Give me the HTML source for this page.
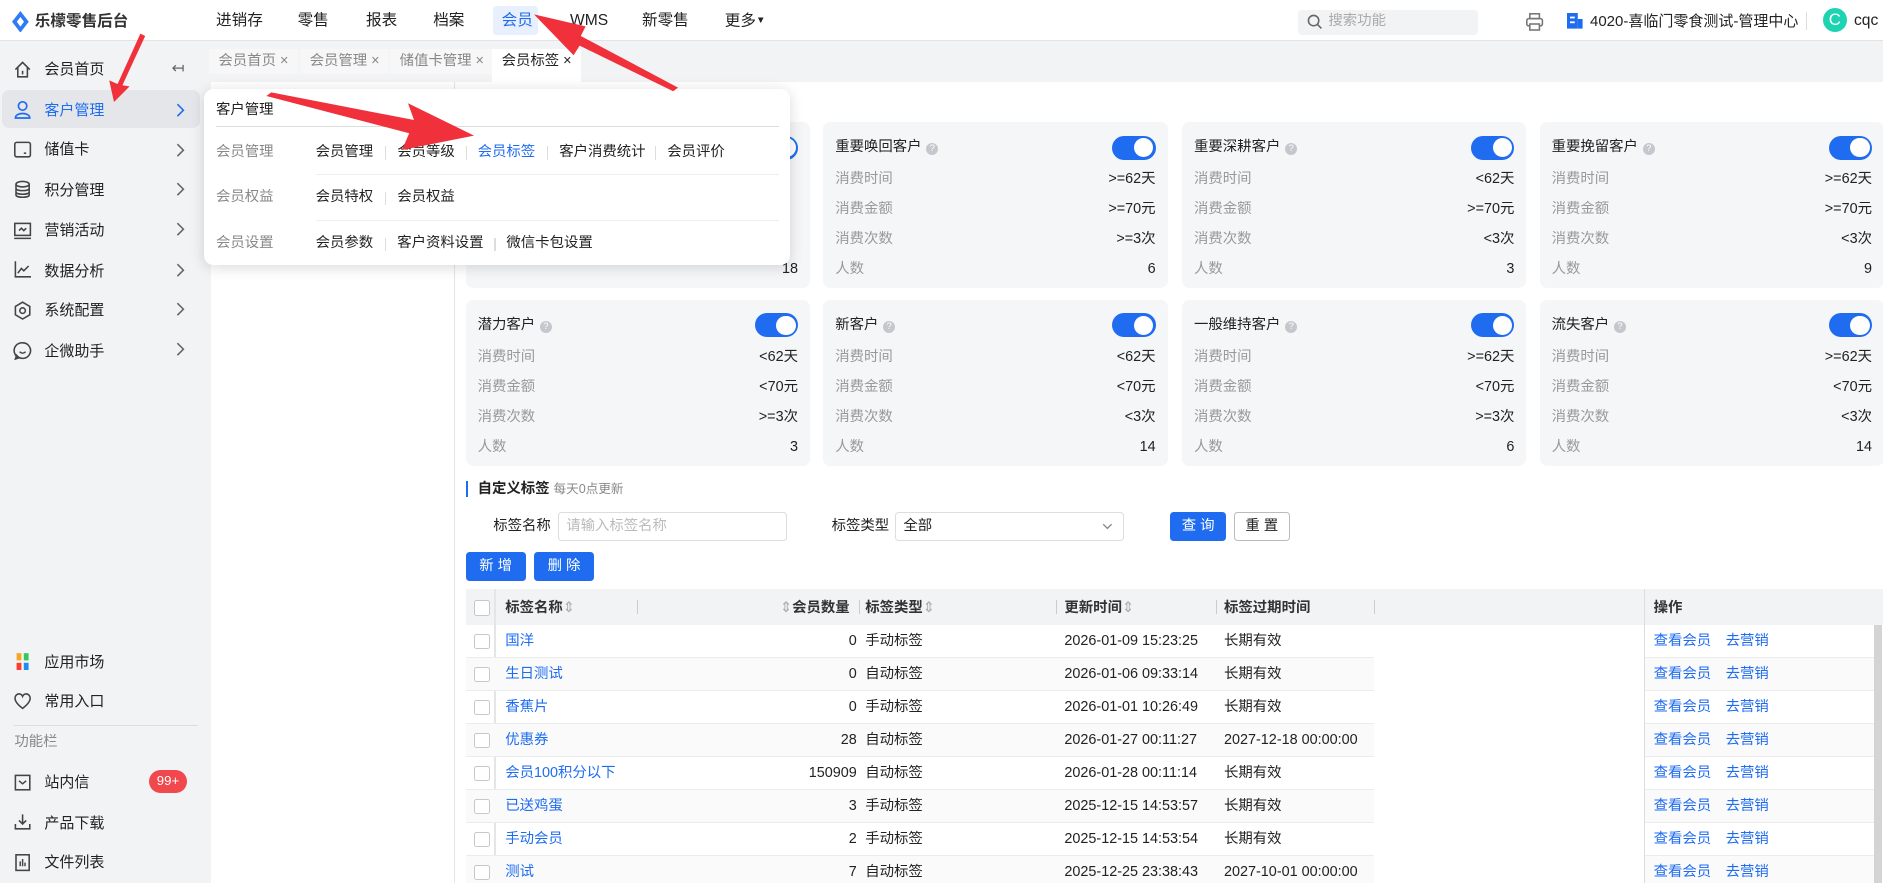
<!DOCTYPE html>
<html><head><meta charset="utf-8"><style>
*{box-sizing:border-box;margin:0;padding:0}
html,body{width:1883px;height:883px;overflow:hidden;background:#fff}
#w{zoom:1.2;width:1570px;height:736px;position:relative;font-family:"Liberation Sans","Noto Sans CJK SC",sans-serif;font-size:12px;line-height:16px;color:#222;overflow:hidden}
.a{position:absolute;white-space:nowrap}
.top{left:0;top:0;width:1570px;height:34px;background:#fff;border-bottom:1px solid #e3e3e3}
.nav{top:9px;font-size:13px;color:#222}
.side{left:0;top:34px;width:176px;height:702px;background:#f2f3f5}
.si{left:37px;font-size:12.5px;color:#222}
.ic{left:11px;width:16px;height:16px}
.chev{left:146px;width:8px;height:12px}
.tabs{left:176px;top:34px;width:1394px;height:34px;background:#f2f3f5}
.tab{top:41px;height:21px;background:#f7f7f8;color:#888;font-size:12px;line-height:21px;padding:0 8px}
.card{width:287px;height:138px;background:#f5f6f8;border-radius:6px}
.card .t{position:absolute;left:10px;top:13px;font-size:12px;color:#222}
.card .q{display:inline-block;width:10px;height:10px;border-radius:50%;background:#c4c7cc;color:#fff;font-size:8px;line-height:10px;text-align:center;margin-left:4px;vertical-align:0}
.sw{position:absolute;right:10px;top:11px;width:36px;height:20px;border-radius:10px;background:#1f6cf0}
.sw:after{content:"";position:absolute;right:2px;top:2px;width:16px;height:16px;border-radius:50%;background:#fff}
.r{position:absolute;left:10px;right:10px;font-size:12px;color:#999}
.r b{position:absolute;right:0;top:0;font-weight:normal;color:#222}
.th{top:491px;left:388px;width:1182px;height:30px;background:#f2f3f5}
.hd{font-size:12px;font-weight:bold;color:#333;top:499px}
.row{left:388px;width:757px;height:27.5px;border-bottom:1px solid #ececec}
.ops{left:1371px;width:191px;height:27.5px;border-bottom:1px solid #ececec}
.cb{width:13px;height:13px;border:1px solid #c8c8c8;background:#fff;border-radius:2px}
.lk{color:#1f6cf0}
.pop{left:170px;top:74px;width:488px;height:147px;background:#fff;border-radius:8px;box-shadow:0 2px 12px rgba(0,0,0,.15)}
.pl{font-size:12px;color:#888}
.pi{font-size:12px;color:#222}
.sep{width:1px;height:11px;background:#ddd}
</style></head><body><div id="w">
<div class="a top"></div>
<svg class="a" style="left:10px;top:9px" width="14" height="18" viewBox="0 0 14 18"><path d="M7 0L14 9L7 18L0 9Z" fill="#2f7bf5"/><path d="M7 5L10 9L7 13L4 9Z" fill="#fff"/></svg>
<div class="a" style="left:29px;top:10px;font-size:13px;font-weight:bold;color:#333">乐檬零售后台</div>
<div class="a nav" style="left:180px">进销存</div>
<div class="a nav" style="left:248px">零售</div>
<div class="a nav" style="left:305px">报表</div>
<div class="a nav" style="left:361px">档案</div>
<div class="a" style="left:411px;top:5px;width:37px;height:24px;background:#e9f0fd;border-radius:3px"></div>
<div class="a nav" style="left:418px;color:#1f6cf0">会员</div>
<div class="a nav" style="left:475px">WMS</div>
<div class="a nav" style="left:535px">新零售</div>
<div class="a nav" style="left:604px">更多<span style="font-size:8px;vertical-align:2px">▼</span></div>
<div class="a" style="left:1082px;top:8px;width:150px;height:21px;background:#f2f3f5;border-radius:3px"></div>
<svg class="a" style="left:1089px;top:12px" width="13" height="13"><circle cx="5.5" cy="5.5" r="4.3" fill="none" stroke="#666" stroke-width="1.3"/><path d="M8.5 8.5L12 12" stroke="#666" stroke-width="1.3"/></svg>
<div class="a" style="left:1107px;top:10px;color:#aaa;font-size:12px">搜索功能</div>
<svg class="a" style="left:1271px;top:10px" width="16" height="16"><rect x="4" y="1.5" width="8" height="4" fill="none" stroke="#777" stroke-width="1.3"/><rect x="1.5" y="5.5" width="13" height="6" rx="1.5" fill="none" stroke="#777" stroke-width="1.3"/><rect x="4" y="10" width="8" height="5" fill="#fff" stroke="#777" stroke-width="1.3"/></svg>
<svg class="a" style="left:1306px;top:11px" width="14" height="14"><rect x="0" y="0" width="9" height="13" fill="#1f6cf0"/><rect x="9" y="5" width="4" height="8" fill="#1f6cf0"/><rect x="2.5" y="3" width="4" height="1.5" fill="#fff"/><rect x="2.5" y="7" width="4" height="1.5" fill="#fff"/></svg>
<div class="a" style="left:1325px;top:10px;font-size:12.5px;color:#222">4020-喜临门零食测试-管理中心</div>
<div class="a" style="left:1505px;top:10px;width:1px;height:15px;background:#ddd"></div>
<div class="a" style="left:1519px;top:7px;width:20px;height:20px;border-radius:50%;background:#1cd3b2;color:#fff;text-align:center;line-height:20px;font-size:14px">C</div>
<div class="a" style="left:1545px;top:9px;font-size:13px">cqc</div>

<div class="a side"></div>
<div class="a" style="left:2px;top:75px;width:165px;height:32px;background:#e4e6ea;border-radius:6px"></div>
<svg class="a ic" style="top:50px" viewBox="0 0 16 16"><path d="M2 8L8 2L14 8M4 6V14H12V6" fill="none" stroke="#444" stroke-width="1.3"/><path d="M8 9V12" stroke="#444" stroke-width="1.3"/></svg>
<div class="a si" style="top:50px">会员首页</div><div class="a" style="left:143px;top:49px;color:#666;font-size:13px">↤</div>
<svg class="a ic" style="top:83px" viewBox="0 0 16 16"><circle cx="8" cy="5" r="3.5" fill="none" stroke="#1f6cf0" stroke-width="1.4"/><path d="M2 15C2 10 14 10 14 15Z" fill="none" stroke="#1f6cf0" stroke-width="1.4"/></svg>
<div class="a si" style="top:84px;color:#1f6cf0">客户管理</div>
<svg class="a chev" style="top:86px" viewBox="0 0 8 12"><path d="M2 1L7 6L2 11" fill="none" stroke="#1f6cf0" stroke-width="1.3"/></svg>
<svg class="a ic" style="top:117px" viewBox="0 0 16 16"><rect x="1.5" y="2" width="13" height="12" rx="1.5" fill="none" stroke="#444" stroke-width="1.3"/><path d="M9 11H11" stroke="#444" stroke-width="1.3"/></svg>
<div class="a si" style="top:117px">储值卡</div><svg class="a chev" style="top:119px" viewBox="0 0 8 12"><path d="M2 1L7 6L2 11" fill="none" stroke="#666" stroke-width="1.3"/></svg>
<svg class="a ic" style="top:150px" viewBox="0 0 16 16"><ellipse cx="8" cy="3.5" rx="5.5" ry="2.3" fill="none" stroke="#444" stroke-width="1.3"/><path d="M2.5 3.5V12.5C2.5 15 13.5 15 13.5 12.5V3.5M2.5 7C2.5 9.5 13.5 9.5 13.5 7M2.5 10C2.5 12.5 13.5 12.5 13.5 10" fill="none" stroke="#444" stroke-width="1.3"/></svg>
<div class="a si" style="top:151px">积分管理</div><svg class="a chev" style="top:152px" viewBox="0 0 8 12"><path d="M2 1L7 6L2 11" fill="none" stroke="#666" stroke-width="1.3"/></svg>
<svg class="a ic" style="top:184px" viewBox="0 0 16 16"><rect x="1.5" y="2" width="13" height="10" fill="none" stroke="#444" stroke-width="1.3"/><path d="M1 14.5H15M5 8L7 6L9 8L11 6" fill="none" stroke="#444" stroke-width="1.3"/></svg>
<div class="a si" style="top:184px">营销活动</div><svg class="a chev" style="top:185px" viewBox="0 0 8 12"><path d="M2 1L7 6L2 11" fill="none" stroke="#666" stroke-width="1.3"/></svg>
<svg class="a ic" style="top:217px" viewBox="0 0 16 16"><path d="M2 1V14H15M4 11L7 7L9 9L13 5" fill="none" stroke="#444" stroke-width="1.3"/></svg>
<div class="a si" style="top:218px">数据分析</div><svg class="a chev" style="top:219px" viewBox="0 0 8 12"><path d="M2 1L7 6L2 11" fill="none" stroke="#666" stroke-width="1.3"/></svg>
<svg class="a ic" style="top:251px" viewBox="0 0 16 16"><path d="M8 1L14 4.5V11.5L8 15L2 11.5V4.5Z" fill="none" stroke="#444" stroke-width="1.3"/><circle cx="8" cy="8" r="2.3" fill="none" stroke="#444" stroke-width="1.3"/></svg>
<div class="a si" style="top:251px">系统配置</div><svg class="a chev" style="top:252px" viewBox="0 0 8 12"><path d="M2 1L7 6L2 11" fill="none" stroke="#666" stroke-width="1.3"/></svg>
<svg class="a ic" style="top:284px" viewBox="0 0 16 16"><path d="M8 1.5A6.5 6.5 0 1 1 3 12L2 15L5 14A6.5 6.5 0 0 1 8 1.5Z" fill="none" stroke="#444" stroke-width="1.3"/><path d="M5.5 9C7 10.5 9 10.5 10.5 9" fill="none" stroke="#444" stroke-width="1.2"/></svg>
<div class="a si" style="top:285px">企微助手</div><svg class="a chev" style="top:285px" viewBox="0 0 8 12"><path d="M2 1L7 6L2 11" fill="none" stroke="#666" stroke-width="1.3"/></svg>

<svg class="a ic" style="top:543px" viewBox="0 0 16 16"><path d="M7 1H3V7H7Z" fill="#f5a623"/><path d="M9 1H13V7H9Z" fill="#34c759"/><path d="M3 9H7V15H3Z" fill="#ff3b30"/><path d="M9 9H13V15H9Z" fill="#1f8cf0"/></svg>
<div class="a si" style="top:544px">应用市场</div>
<svg class="a ic" style="top:576px" viewBox="0 0 16 16"><path d="M8 14.5C2 10 1 7 2 4.5C3.5 1.5 7 2 8 4.5C9 2 12.5 1.5 14 4.5C15 7 14 10 8 14.5Z" fill="none" stroke="#444" stroke-width="1.3"/></svg>
<div class="a si" style="top:577px">常用入口</div>
<div class="a" style="left:12px;top:604px;width:153px;height:1px;background:#ddd"></div>
<div class="a" style="left:12px;top:611px;color:#888;font-size:12px">功能栏</div>
<svg class="a ic" style="top:644px" viewBox="0 0 16 16"><rect x="2" y="2" width="12" height="12" fill="none" stroke="#444" stroke-width="1.3"/><path d="M5 6.5L8 9L11 6.5" fill="none" stroke="#444" stroke-width="1.3"/></svg>
<div class="a si" style="top:644px">站内信</div>
<div class="a" style="left:124px;top:642px;width:32px;height:19px;border-radius:10px;background:#f0484c;color:#fff;font-size:11px;text-align:center;line-height:19px">99+</div>
<svg class="a ic" style="top:677px" viewBox="0 0 16 16"><path d="M8 2V10M5 7L8 10L11 7M2 10V14H14V10" fill="none" stroke="#444" stroke-width="1.3"/></svg>
<div class="a si" style="top:678px">产品下载</div>
<svg class="a ic" style="top:711px" viewBox="0 0 16 16"><rect x="2.5" y="1.5" width="11" height="13" fill="none" stroke="#444" stroke-width="1.3"/><path d="M6 11V7M8 11V5M10 11V8" stroke="#444" stroke-width="1.2"/></svg>
<div class="a si" style="top:711px">文件列表</div>

<div class="a tabs"></div>
<div class="a tab" style="left:174px">会员首页 ×</div>
<div class="a tab" style="left:250px">会员管理 ×</div>
<div class="a tab" style="left:325px">储值卡管理 ×</div>
<div class="a tab" style="left:410px;background:#fff;color:#222;height:27px">会员标签 ×</div>
<div class="a" style="left:378px;top:68px;width:1px;height:668px;background:#e5e5e5"></div>

<!-- cards -->
<div class="a card" style="left:388px;top:102px"><div class="sw"></div><div class="r" style="top:115px"><b>18</b></div></div>
<div class="a card" style="left:686px;top:102px"><div class="t">重要唤回客户<span class="q">?</span></div><div class="sw"></div>
<div class="r" style="top:40px">消费时间<b>&gt;=62天</b></div><div class="r" style="top:65px">消费金额<b>&gt;=70元</b></div><div class="r" style="top:90px">消费次数<b>&gt;=3次</b></div><div class="r" style="top:115px">人数<b>6</b></div></div>
<div class="a card" style="left:985px;top:102px"><div class="t">重要深耕客户<span class="q">?</span></div><div class="sw"></div>
<div class="r" style="top:40px">消费时间<b>&lt;62天</b></div><div class="r" style="top:65px">消费金额<b>&gt;=70元</b></div><div class="r" style="top:90px">消费次数<b>&lt;3次</b></div><div class="r" style="top:115px">人数<b>3</b></div></div>
<div class="a card" style="left:1283px;top:102px"><div class="t">重要挽留客户<span class="q">?</span></div><div class="sw"></div>
<div class="r" style="top:40px">消费时间<b>&gt;=62天</b></div><div class="r" style="top:65px">消费金额<b>&gt;=70元</b></div><div class="r" style="top:90px">消费次数<b>&lt;3次</b></div><div class="r" style="top:115px">人数<b>9</b></div></div>

<div class="a card" style="left:388px;top:250px"><div class="t">潜力客户<span class="q">?</span></div><div class="sw"></div>
<div class="r" style="top:40px">消费时间<b>&lt;62天</b></div><div class="r" style="top:65px">消费金额<b>&lt;70元</b></div><div class="r" style="top:90px">消费次数<b>&gt;=3次</b></div><div class="r" style="top:115px">人数<b>3</b></div></div>
<div class="a card" style="left:686px;top:250px"><div class="t">新客户<span class="q">?</span></div><div class="sw"></div>
<div class="r" style="top:40px">消费时间<b>&lt;62天</b></div><div class="r" style="top:65px">消费金额<b>&lt;70元</b></div><div class="r" style="top:90px">消费次数<b>&lt;3次</b></div><div class="r" style="top:115px">人数<b>14</b></div></div>
<div class="a card" style="left:985px;top:250px"><div class="t">一般维持客户<span class="q">?</span></div><div class="sw"></div>
<div class="r" style="top:40px">消费时间<b>&gt;=62天</b></div><div class="r" style="top:65px">消费金额<b>&lt;70元</b></div><div class="r" style="top:90px">消费次数<b>&gt;=3次</b></div><div class="r" style="top:115px">人数<b>6</b></div></div>
<div class="a card" style="left:1283px;top:250px"><div class="t">流失客户<span class="q">?</span></div><div class="sw"></div>
<div class="r" style="top:40px">消费时间<b>&gt;=62天</b></div><div class="r" style="top:65px">消费金额<b>&lt;70元</b></div><div class="r" style="top:90px">消费次数<b>&lt;3次</b></div><div class="r" style="top:115px">人数<b>14</b></div></div>

<!-- custom tags -->
<div class="a" style="left:388px;top:401px;width:2px;height:13px;background:#1f6cf0"></div>
<div class="a" style="left:398px;top:400px;font-weight:bold;font-size:12px">自定义标签 <span style="font-weight:normal;color:#888;font-size:10.5px">每天0点更新</span></div>
<div class="a" style="left:411px;top:431px">标签名称</div>
<div class="a" style="left:465px;top:427px;width:191px;height:24px;border:1px solid #ddd;border-radius:3px;color:#bbb;padding:3px 6px">请输入标签名称</div>
<div class="a" style="left:693px;top:431px">标签类型</div>
<div class="a" style="left:746px;top:427px;width:191px;height:24px;border:1px solid #ddd;border-radius:3px;padding:3px 6px">全部<svg style="position:absolute;right:9px;top:8px" width="9" height="6"><path d="M1 1L4.5 4.5L8 1" fill="none" stroke="#888" stroke-width="1.1"/></svg></div>
<div class="a" style="left:975px;top:427px;width:47px;height:24px;background:#1f6cf0;color:#fff;border-radius:3px;text-align:center;line-height:24px">查 询</div>
<div class="a" style="left:1028px;top:427px;width:47px;height:24px;border:1px solid #bbb;border-radius:3px;text-align:center;line-height:22px">重 置</div>
<div class="a" style="left:388px;top:460px;width:50px;height:24px;background:#1f6cf0;color:#fff;border-radius:3px;text-align:center;line-height:24px">新 增</div>
<div class="a" style="left:445px;top:460px;width:50px;height:24px;background:#1f6cf0;color:#fff;border-radius:3px;text-align:center;line-height:24px">删 除</div>

<div class="a th"></div>
<div class="a cb" style="left:395px;top:500px"></div>
<div class="a" style="left:412px;top:491px;width:1px;height:245px;background:#e5e5e5"></div>
<div class="a hd" style="left:421px">标签名称<span style="color:#aaa;font-weight:normal">⇕</span></div>
<div class="a" style="left:531px;top:500px;width:1px;height:12px;background:#ccc"></div>
<div class="a hd" style="left:650px"><span style="color:#aaa;font-weight:normal">⇕</span>会员数量</div>
<div class="a" style="left:716px;top:500px;width:1px;height:12px;background:#ccc"></div>
<div class="a hd" style="left:721px">标签类型<span style="color:#aaa;font-weight:normal">⇕</span></div>
<div class="a" style="left:880px;top:500px;width:1px;height:12px;background:#ccc"></div>
<div class="a hd" style="left:887px">更新时间<span style="color:#aaa;font-weight:normal">⇕</span></div>
<div class="a" style="left:1013px;top:500px;width:1px;height:12px;background:#ccc"></div>
<div class="a hd" style="left:1020px">标签过期时间</div>
<div class="a" style="left:1145px;top:500px;width:1px;height:12px;background:#ccc"></div>
<div class="a" style="left:1370px;top:491px;width:1px;height:245px;background:#ddd"></div>
<div class="a hd" style="left:1378px">操作</div>
<div class="a" style="left:1562px;top:521px;width:6px;height:215px;background:#d4d4d4"></div>

<div class="a row" style="top:521px"></div><div class="a ops" style="top:521px"></div>
<div class="a row" style="top:548.5px;background:#fafafa"></div><div class="a ops" style="top:548.5px;background:#fafafa"></div>
<div class="a row" style="top:576px"></div><div class="a ops" style="top:576px"></div>
<div class="a row" style="top:603.5px;background:#fafafa"></div><div class="a ops" style="top:603.5px;background:#fafafa"></div>
<div class="a row" style="top:631px"></div><div class="a ops" style="top:631px"></div>
<div class="a row" style="top:658.5px;background:#fafafa"></div><div class="a ops" style="top:658.5px;background:#fafafa"></div>
<div class="a row" style="top:686px"></div><div class="a ops" style="top:686px"></div>
<div class="a row" style="top:713.5px;background:#fafafa"></div><div class="a ops" style="top:713.5px;background:#fafafa"></div>

<div class="a" style="left:395px;top:521px;width:1170px">
<div style="position:relative;height:27.5px"><div class="a cb" style="left:0;top:7px"></div><span class="a lk" style="left:26px;top:6px">国洋</span><span class="a" style="left:0;width:319px;text-align:right;top:6px">0</span><span class="a" style="left:326px;top:6px">手动标签</span><span class="a" style="left:492px;top:6px">2026-01-09 15:23:25</span><span class="a" style="left:625px;top:6px">长期有效</span><span class="a lk" style="left:983px;top:6px">查看会员</span><span class="a lk" style="left:1043px;top:6px">去营销</span></div>
<div style="position:relative;height:27.5px"><div class="a cb" style="left:0;top:7px"></div><span class="a lk" style="left:26px;top:6px">生日测试</span><span class="a" style="left:0;width:319px;text-align:right;top:6px">0</span><span class="a" style="left:326px;top:6px">自动标签</span><span class="a" style="left:492px;top:6px">2026-01-06 09:33:14</span><span class="a" style="left:625px;top:6px">长期有效</span><span class="a lk" style="left:983px;top:6px">查看会员</span><span class="a lk" style="left:1043px;top:6px">去营销</span></div>
<div style="position:relative;height:27.5px"><div class="a cb" style="left:0;top:7px"></div><span class="a lk" style="left:26px;top:6px">香蕉片</span><span class="a" style="left:0;width:319px;text-align:right;top:6px">0</span><span class="a" style="left:326px;top:6px">手动标签</span><span class="a" style="left:492px;top:6px">2026-01-01 10:26:49</span><span class="a" style="left:625px;top:6px">长期有效</span><span class="a lk" style="left:983px;top:6px">查看会员</span><span class="a lk" style="left:1043px;top:6px">去营销</span></div>
<div style="position:relative;height:27.5px"><div class="a cb" style="left:0;top:7px"></div><span class="a lk" style="left:26px;top:6px">优惠券</span><span class="a" style="left:0;width:319px;text-align:right;top:6px">28</span><span class="a" style="left:326px;top:6px">自动标签</span><span class="a" style="left:492px;top:6px">2026-01-27 00:11:27</span><span class="a" style="left:625px;top:6px">2027-12-18 00:00:00</span><span class="a lk" style="left:983px;top:6px">查看会员</span><span class="a lk" style="left:1043px;top:6px">去营销</span></div>
<div style="position:relative;height:27.5px"><div class="a cb" style="left:0;top:7px"></div><span class="a lk" style="left:26px;top:6px">会员100积分以下</span><span class="a" style="left:0;width:319px;text-align:right;top:6px">150909</span><span class="a" style="left:326px;top:6px">自动标签</span><span class="a" style="left:492px;top:6px">2026-01-28 00:11:14</span><span class="a" style="left:625px;top:6px">长期有效</span><span class="a lk" style="left:983px;top:6px">查看会员</span><span class="a lk" style="left:1043px;top:6px">去营销</span></div>
<div style="position:relative;height:27.5px"><div class="a cb" style="left:0;top:7px"></div><span class="a lk" style="left:26px;top:6px">已送鸡蛋</span><span class="a" style="left:0;width:319px;text-align:right;top:6px">3</span><span class="a" style="left:326px;top:6px">手动标签</span><span class="a" style="left:492px;top:6px">2025-12-15 14:53:57</span><span class="a" style="left:625px;top:6px">长期有效</span><span class="a lk" style="left:983px;top:6px">查看会员</span><span class="a lk" style="left:1043px;top:6px">去营销</span></div>
<div style="position:relative;height:27.5px"><div class="a cb" style="left:0;top:7px"></div><span class="a lk" style="left:26px;top:6px">手动会员</span><span class="a" style="left:0;width:319px;text-align:right;top:6px">2</span><span class="a" style="left:326px;top:6px">手动标签</span><span class="a" style="left:492px;top:6px">2025-12-15 14:53:54</span><span class="a" style="left:625px;top:6px">长期有效</span><span class="a lk" style="left:983px;top:6px">查看会员</span><span class="a lk" style="left:1043px;top:6px">去营销</span></div>
<div style="position:relative;height:27.5px"><div class="a cb" style="left:0;top:7px"></div><span class="a lk" style="left:26px;top:6px">测试</span><span class="a" style="left:0;width:319px;text-align:right;top:6px">7</span><span class="a" style="left:326px;top:6px">自动标签</span><span class="a" style="left:492px;top:6px">2025-12-25 23:38:43</span><span class="a" style="left:625px;top:6px">2027-10-01 00:00:00</span><span class="a lk" style="left:983px;top:6px">查看会员</span><span class="a lk" style="left:1043px;top:6px">去营销</span></div>
</div>

<!-- popup -->
<div class="a pop"></div>
<div class="a pi" style="left:180px;top:84px">客户管理</div>
<div class="a" style="left:180px;top:105px;width:469px;height:1px;background:#ddd"></div>
<div class="a pl" style="left:180px;top:119px">会员管理</div>
<div class="a pi" style="left:263px;top:119px">会员管理</div><div class="a sep" style="left:321px;top:122px"></div>
<div class="a pi" style="left:331px;top:119px">会员等级</div><div class="a sep" style="left:388px;top:122px"></div>
<div class="a pi" style="left:398px;top:119px;color:#1f6cf0">会员标签</div><div class="a sep" style="left:456px;top:122px"></div>
<div class="a pi" style="left:466px;top:119px">客户消费统计</div><div class="a sep" style="left:546px;top:122px"></div>
<div class="a pi" style="left:556px;top:119px">会员评价</div>
<div class="a" style="left:263px;top:145px;width:386px;height:1px;background:#eee"></div>
<div class="a pl" style="left:180px;top:157px">会员权益</div>
<div class="a pi" style="left:263px;top:157px">会员特权</div><div class="a sep" style="left:321px;top:160px"></div>
<div class="a pi" style="left:331px;top:157px">会员权益</div>
<div class="a" style="left:263px;top:183px;width:386px;height:1px;background:#eee"></div>
<div class="a pl" style="left:180px;top:195px">会员设置</div>
<div class="a pi" style="left:263px;top:195px">会员参数</div><div class="a sep" style="left:321px;top:198px"></div>
<div class="a pi" style="left:331px;top:195px">客户资料设置</div><div class="a sep" style="left:412px;top:198px"></div>
<div class="a pi" style="left:422px;top:195px">微信卡包设置</div>

<!-- arrows -->
<svg class="a" style="left:0;top:0" width="1570" height="736">
<polygon points="121,30 117,28 98,70 91,67 95,85 108,72 102,71" fill="#f0303a"/>
<polygon points="222,80 226,77 345,100 340,86 395,113 335,125 341,111" fill="#f0303a"/>
<polygon points="565,73 561,76 483,38 478,46 445,12 488,22 484,30" fill="#f0303a"/>
</svg>
</div></body></html>
